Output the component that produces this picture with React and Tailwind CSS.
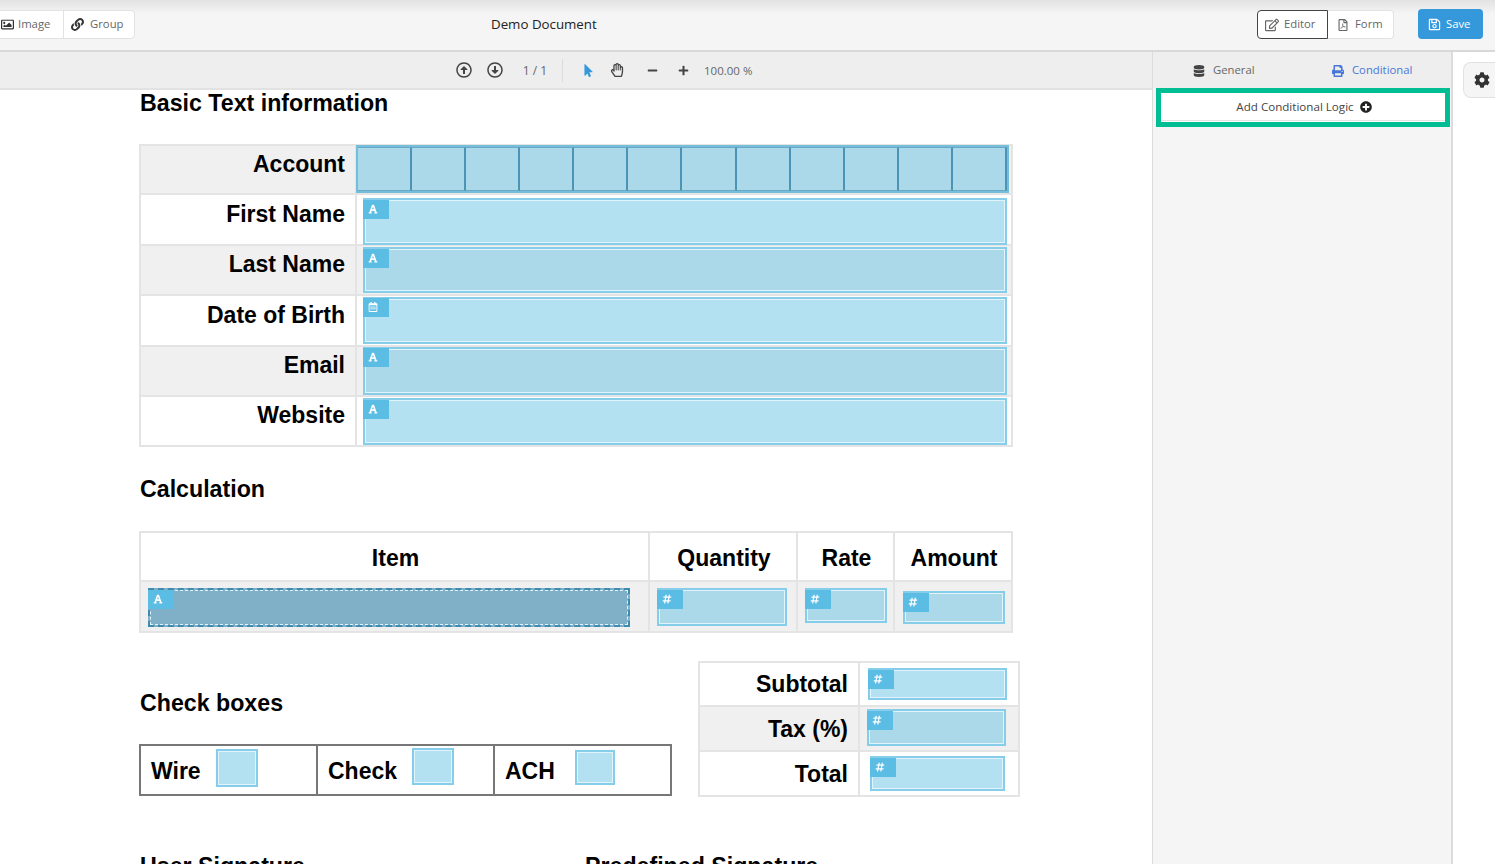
import React from "react";
import {
  FaRegImage,
  FaLink,
  FaRegEdit,
  FaRegFilePdf,
  FaRegSave,
  FaRegArrowAltCircleUp,
  FaRegArrowAltCircleDown,
  FaMousePointer,
  FaRegHandPaper,
  FaMinus,
  FaPlus,
  FaDatabase,
  FaPrint,
  FaPlusCircle,
  FaCog,
  FaFont,
  FaHashtag,
  FaRegCalendarAlt,
} from "react-icons/fa";

const pdfFont = "font-['Liberation_Sans',Arial,sans-serif]";

// a form field dropped on top of the pdf, tag sits over its corner
const Field = ({ icon: Icon, className, tagTop = "top-[0px]", tone = "bg-[#b3e1f2] border-[#85cde9]" }) => (
  <div className={`relative shrink-0 border-2 ${tone} ${className}`}>
    <div className="h-full w-full border border-[#e2f4fb]"></div>
    {Icon && (
      <div className={`absolute left-[-2px] ${tagTop} flex h-[19px] w-[26px] items-start pl-[5px] pt-[4px] bg-[#5bbce4] text-white`}>
        <Icon className="text-[10px]" />
      </div>
    )}
  </div>
);

const Heading = ({ children, className }) => (
  <h2 className={`text-[23.2px] font-bold leading-[26px] text-black ${className}`}>{children}</h2>
);

const Label = ({ children, className }) => (
  <div className={`w-[216px] shrink-0 border-r-2 border-[#e4e4e4] pr-[10px] text-right text-[23px] font-bold leading-[26px] text-black ${className}`}>
    {children}
  </div>
);

const combCells = ["a", "b", "c", "d", "e", "f", "g", "h", "i", "j", "k", "l"];

const grey = "bg-[#acd9ea] border-[#85cde9]";

const BasicInfoTable = () => (
  <div className="-ml-px mt-[28px] w-[874px] border-2 border-[#e4e4e4]">
    <div className="flex h-[49px] border-b-2 border-[#e4e4e4] bg-[#f0f0f0]">
      <Label className="pt-[5px]">Account</Label>
      <div className="relative -ml-px -mt-px flex h-[48px] w-[653px] border-2 border-[#74bedc] bg-[#acd9ea]">
        {combCells.map((c) => (
          <div
            key={c}
            className="h-full flex-1 border-y border-y-[#6aa9c6] border-r-2 border-r-[#4b94b5]"
          ></div>
        ))}
      </div>
    </div>
    <div className="flex h-[51px] border-b-2 border-[#e4e4e4] bg-white">
      <Label className="pt-[6px]">First Name</Label>
      <Field icon={FaFont} className="ml-[6px] mt-[3px] h-[47px] w-[644px]" />
    </div>
    <div className="flex h-[50px] border-b-2 border-[#e4e4e4] bg-[#f0f0f0]">
      <Label className="pt-[5px]">Last Name</Label>
      <Field icon={FaFont} tone={grey} className="ml-[6px] mt-[1px] h-[46px] w-[644px]" />
    </div>
    <div className="flex h-[51px] border-b-2 border-[#e4e4e4] bg-white">
      <Label className="pt-[6px]">Date of Birth</Label>
      <Field icon={FaRegCalendarAlt} tagTop="top-[-1px]" className="ml-[6px] mt-[1px] h-[47px] w-[644px]" />
    </div>
    <div className="flex h-[50px] border-b-2 border-[#e4e4e4] bg-[#f0f0f0]">
      <Label className="pt-[5px]">Email</Label>
      <Field icon={FaFont} tone={grey} tagTop="top-[-1px]" className="ml-[6px] h-[48px] w-[644px]" />
    </div>
    <div className="flex h-[48px] bg-white">
      <Label className="pt-[5px]">Website</Label>
      <Field icon={FaFont} className="ml-[6px] mt-[1px] h-[47px] w-[644px]" />
    </div>
  </div>
);

const CalcCell = ({ className, children }) => (
  <div className={`flex shrink-0 justify-center border-r-2 border-[#e4e4e4] pl-[2px] text-[23px] font-bold leading-[26px] text-black ${className}`}>
    {children}
  </div>
);

const CalculationTable = () => (
  <div className="-ml-px mt-[29px] w-[874px] border-2 border-[#e4e4e4]">
    <div className="flex h-[49px] border-b-2 border-[#e4e4e4] bg-white">
      <CalcCell className="w-[509px] pt-[12px]">Item</CalcCell>
      <CalcCell className="w-[148px] pt-[12px]">Quantity</CalcCell>
      <CalcCell className="w-[97px] pt-[12px]">Rate</CalcCell>
      <div className="flex flex-1 justify-center pl-[2px] pt-[12px] text-[23px] font-bold leading-[26px] text-black">Amount</div>
    </div>
    <div className="flex h-[49px] bg-[#f0f0f0]">
      <div className="w-[509px] shrink-0 border-r-2 border-[#e4e4e4] pl-[7px] pt-[6px]">
        <div className="relative h-[39px] w-[482px] border-2 border-dashed border-[#3d8cb0] bg-[#80b0c8]">
          <div className="h-full w-full border border-dashed border-[#e2f4fb]"></div>
          <div className="absolute left-[-2px] top-[0px] flex h-[19px] w-[26px] items-start bg-[#5bbce4] pl-[5px] pt-[4px] text-white">
            <FaFont className="text-[10px]" />
          </div>
        </div>
      </div>
      <div className="w-[148px] shrink-0 border-r-2 border-[#e4e4e4] pl-[7px] pt-[6px]">
        <Field icon={FaHashtag} tone={grey} className="h-[38px] w-[130px]" />
      </div>
      <div className="w-[97px] shrink-0 border-r-2 border-[#e4e4e4] pl-[7px] pt-[6px]">
        <Field icon={FaHashtag} tone={grey} className="h-[35px] w-[82px]" />
      </div>
      <div className="flex-1 pl-[8px] pt-[9px]">
        <Field icon={FaHashtag} tone={grey} className="h-[33px] w-[102px]" />
      </div>
    </div>
  </div>
);

const CheckCell = ({ label, boxClass, last }) => (
  <div className={`flex h-full w-[177px] shrink-0 items-start pl-[10px] ${last ? "" : "border-r-2 border-[#777]"}`}>
    <span className="mt-[12px] text-[23px] font-bold leading-[26px] text-black">{label}</span>
    <Field className={boxClass} />
  </div>
);

const CheckBoxes = () => (
  <div className="-ml-px mt-[28px] flex h-[52px] w-[533px] border-2 border-[#777]">
    <CheckCell label="Wire" boxClass="ml-[15px] mt-[3px] h-[38px] w-[42px]" />
    <CheckCell label="Check" boxClass="ml-[15px] mt-[2px] h-[37px] w-[42px]" />
    <CheckCell label="ACH" last boxClass="ml-[20px] mt-[4px] h-[35px] w-[40px]" />
  </div>
);

const TotalLabel = ({ children, className }) => (
  <div className={`w-[160px] shrink-0 border-r-2 border-[#e4e4e4] pr-[10px] text-right text-[23px] font-bold leading-[26px] text-black ${className}`}>
    {children}
  </div>
);

const TotalsTable = () => (
  <div className="h-[136px] w-[322px] shrink-0 border-2 border-[#e4e4e4]">
    <div className="flex h-[44px] border-b-2 border-[#e4e4e4] bg-white">
      <TotalLabel className="pt-[8px]">Subtotal</TotalLabel>
      <Field icon={FaHashtag} className="ml-[8px] mt-[5px] h-[32px] w-[139px]" />
    </div>
    <div className="flex h-[45px] border-b-2 border-[#e4e4e4] bg-[#f0f0f0]">
      <TotalLabel className="pt-[9px]">Tax (%)</TotalLabel>
      <Field icon={FaHashtag} tone={grey} className="ml-[7px] mt-[2px] h-[37px] w-[139px]" />
    </div>
    <div className="flex h-[43px] bg-white">
      <TotalLabel className="pt-[9px]">Total</TotalLabel>
      <Field icon={FaHashtag} className="ml-[10px] mt-[4px] h-[35px] w-[135px]" />
    </div>
  </div>
);

const ToolIcon = ({ children, className }) => (
  <span className={`flex items-center justify-center ${className}`}>{children}</span>
);

const Header = () => (
  <div className="flex h-[52px] w-[1495px] shrink-0 items-center border-b-2 border-[#d8d8d8] bg-[linear-gradient(#e2e2e2,#f5f5f5_14px)] pb-[2px] text-[11.3px] text-[#666]">
    <div className="-ml-[8px] flex h-[29px] items-stretch rounded border border-[#e2e2e2] bg-white">
      <button className="flex w-[71px] items-center gap-[4px] border-r border-[#e2e2e2] pl-[8px] pt-[1px]">
        <FaRegImage className="text-[13px] text-[#333]" />
        Image
      </button>
      <button className="flex w-[70px] items-center gap-[6px] pl-[7px] pt-[1px]">
        <FaLink className="text-[13px] text-[#333]" />
        Group
      </button>
    </div>
    <div className="ml-[356px] mt-[2px] text-[13.3px] text-[#222]">Demo Document</div>
    <div className="ml-auto flex items-center pr-[12px]">
      <div className="flex h-[29px] items-stretch">
        <button className="flex w-[71px] items-center gap-[5px] rounded-l border border-[#444] bg-white pl-[7px] pt-[1px]">
          <FaRegEdit className="text-[14px]" />
          Editor
        </button>
        <button className="flex w-[66px] items-center gap-[6px] rounded-r border border-l-0 border-[#e2e2e2] bg-white pl-[9px] pt-[1px]">
          <FaRegFilePdf className="text-[12px]" />
          Form
        </button>
      </div>
      <button className="ml-[24px] flex h-[30px] w-[65px] items-center gap-[5px] rounded-sm bg-[#3498db] pl-[10px] pt-[1px] text-white">
        <FaRegSave className="text-[13px]" />
        Save
      </button>
    </div>
  </div>
);

const Toolbar = () => (
  <div className="flex h-[38px] shrink-0 items-center border-b-2 border-[#e2e2e2] bg-[#eeeeee] pl-[456px] text-[11.5px] text-[#666]">
    <FaRegArrowAltCircleUp className="text-[16px] text-[#444]" />
    <FaRegArrowAltCircleDown className="ml-[15px] text-[16px] text-[#444]" />
    <span className="ml-[19px] mt-[2px] w-[26px] text-center text-[12px]">1 / 1</span>
    <span className="ml-[14px] h-[23px] w-px bg-[#dcdcdc]"></span>
    <ToolIcon className="ml-[19px]"><FaMousePointer className="text-[13px] text-[#3498db]" /></ToolIcon>
    <ToolIcon className="ml-[15px]"><FaRegHandPaper className="text-[14px] text-[#444]" /></ToolIcon>
    <ToolIcon className="ml-[23px]"><FaMinus className="text-[11px] text-[#444]" /></ToolIcon>
    <ToolIcon className="ml-[20px]"><FaPlus className="text-[11px] text-[#444]" /></ToolIcon>
    <span className="ml-[15px] mt-[2px]">100.00 %</span>
  </div>
);

const Sidebar = () => (
  <div className="flex w-[301px] shrink-0 flex-col border-l border-r-2 border-l-[#dcdcdc] border-r-[#dcdcdc] bg-[#f5f5f5] text-[11.3px]">
    <div className="flex h-[36px] shrink-0 bg-[#eeeeee]">
      <button className="flex w-[149px] items-center gap-[8px] pl-[40px] pt-[1px] text-[#666]">
        <FaDatabase className="text-[12px] text-[#444]" />
        General
      </button>
      <button className="flex flex-1 items-center gap-[8px] pl-[30px] pt-[1px] text-[#4a76d8]">
        <FaPrint className="text-[12px]" />
        Conditional
      </button>
    </div>
    <div className="ml-[3px] h-[39px] w-[294px] shrink-0 border-[5px] border-[#00bd94] bg-white">
      <button className="flex h-[28px] w-full items-center justify-center gap-[6px] border-b border-[#e4e4e4] pl-[2px] text-[11.6px] text-[#444]">
        Add Conditional Logic
        <FaPlusCircle className="text-[12px] text-[#222]" />
      </button>
    </div>
  </div>
);

const App = () => {
  return (
    <div className="flex h-[864px] w-[1510px] flex-col overflow-hidden bg-white font-['Open_Sans',sans-serif]">
      <Header />
      <div className="flex min-h-0 w-[1495px] flex-1">
        <div className="flex w-[1152px] shrink-0 flex-col overflow-hidden">
          <Toolbar />
          <div className={`pl-[140px] ${pdfFont}`}>
            <Heading>Basic Text information</Heading>
            <BasicInfoTable />
            <Heading className="mt-[29px]">Calculation</Heading>
            <CalculationTable />
            <div className="mt-[28px] flex">
              <div className="w-[558px] shrink-0">
                <Heading className="mt-[29px]">Check boxes</Heading>
                <CheckBoxes />
              </div>
              <TotalsTable />
            </div>
            <div className="mt-[56px] flex">
              <Heading className="w-[445px] shrink-0">User Signature</Heading>
              <Heading>Predefined Signature</Heading>
            </div>
          </div>
        </div>
        <Sidebar />
        <div className="flex-1 bg-white pl-[10px] pt-[10px]">
          <div className="flex h-[36px] w-full items-center justify-center rounded-l-lg border border-r-0 border-[#e2e2e2] bg-[#f5f5f5] pl-[4px]">
            <FaCog className="text-[16px] text-[#333]" />
          </div>
        </div>
      </div>
    </div>
  );
};

export default App;
